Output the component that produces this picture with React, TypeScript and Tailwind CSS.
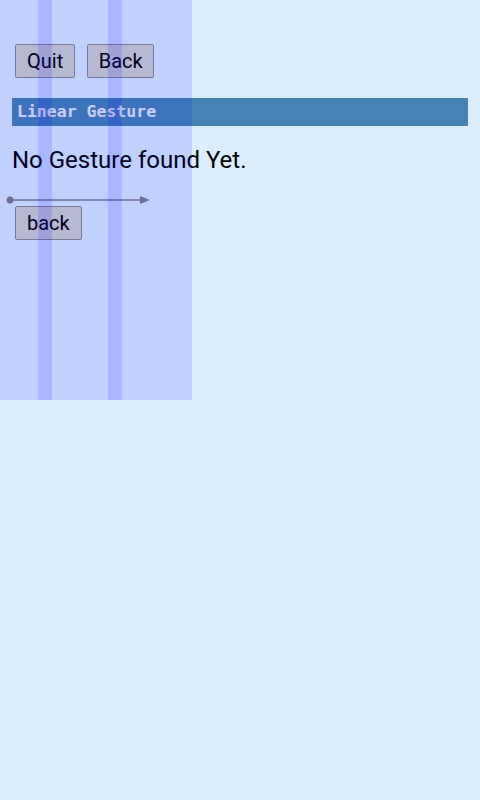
export default function App() {
  return (
    <div className="relative min-h-[800px] w-full bg-[#dbeeff] font-['Roboto',sans-serif] text-black">
      <div className="pt-[44px]">
        {/* Top buttons */}
        <div className="flex gap-[12px] pl-[15px]">
          <button className="h-[34px] rounded-[2px] border border-[#888a8c] bg-[#d1d2cc] px-[11px] text-[20px] leading-none">
            Quit
          </button>
          <button className="h-[34px] w-[67px] rounded-[2px] border border-[#888a8c] bg-[#d1d2cc] text-[20px] leading-none">
            Back
          </button>
        </div>

        {/* Title bar */}
        <div className="mx-[12px] mt-[20px] flex h-[28px] items-center bg-[#4682b4] pl-[5px] font-['DejaVu_Sans_Mono',monospace] text-[16.5px] font-bold text-[#e6ecf5]">
          Linear Gesture
        </div>

        <p className="mt-[20px] pl-[12px] text-[24px] leading-[28px]">No Gesture found Yet.</p>

        {/* Gesture arrow */}
        <svg width="160" height="10" viewBox="0 0 160 10" className="mt-[21px] block">
          <circle cx="10" cy="5" r="3.5" fill="#7b7e86" />
          <line x1="10" y1="5" x2="142" y2="5" stroke="#7b7e86" strokeWidth="1.5" />
          <polygon points="140,1 150,5 140,9" fill="#7b7e86" />
        </svg>

        <div className="mt-[1px] pl-[15px]">
          <button className="h-[34px] rounded-[2px] border border-[#888a8c] bg-[#d1d2cc] px-[11px] text-[20px] leading-none">
            back
          </button>
        </div>
      </div>

      {/* Translucent overlay with stripes */}
      <div className="pointer-events-none absolute left-0 top-0 h-[400px] w-[192px] bg-[rgba(0,0,255,0.12)]">
        <div className="absolute left-[38px] top-0 h-full w-[14px] bg-[rgba(0,0,255,0.12)]" />
        <div className="absolute left-[108px] top-0 h-full w-[14px] bg-[rgba(0,0,255,0.12)]" />
      </div>
    </div>
  );
}
